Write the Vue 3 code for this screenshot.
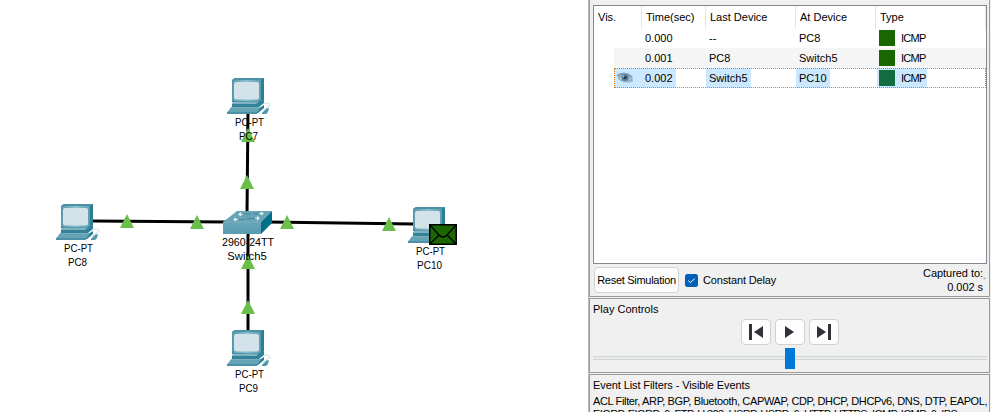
<script setup>
const links = [
  { x1: 248, y1: 110, x2: 247, y2: 214 },
  { x1: 248, y1: 233, x2: 248, y2: 333 },
  { x1: 92, y1: 221, x2: 228, y2: 222 },
  { x1: 268, y1: 222, x2: 414, y2: 224 },
]
const arrows = [[248, 135], [247, 182], [127, 221], [197, 222], [287, 222], [389, 224], [248, 262], [248, 307]]
const pcs = [
  { name: 'PC7', x: 227, y: 78, width: 19 },
  { name: 'PC8', x: 56, y: 204, width: 19 },
  { name: 'PC10', x: 408, y: 207, width: 25 },
  { name: 'PC9', x: 227, y: 330, width: 19 },
]
const events = [
  { time: '0.000', last: '--', at: 'PC8' },
  { time: '0.001', last: 'PC8', at: 'Switch5' },
  { time: '0.002', last: 'Switch5', at: 'PC10', current: true },
]
</script>

<template>
  <main class="app">
    <svg class="canvas" width="588" height="412" viewBox="0 0 588 412">
      <defs>
        <linearGradient id="face" x1="0" y1="0" x2="0" y2="1">
          <stop offset="0" stop-color="#68a5b8" />
          <stop offset="1" stop-color="#579caf" />
        </linearGradient>
        <linearGradient id="frame" x1="0" y1="0" x2="1" y2="0">
          <stop offset="0" stop-color="#5598ab" />
          <stop offset=".5" stop-color="#8fc0cd" />
          <stop offset="1" stop-color="#5c9db2" />
        </linearGradient>
      </defs>
      <line v-for="(l, i) in links" :key="i" v-bind="l" stroke="#000" stroke-width="3" />

      <g v-for="pc in pcs" :key="pc.name" :transform="`translate(${pc.x} ${pc.y})`">
        <path d="M5 2 8 0H37V21L33 24H5Z" fill="#2d7e95" />
        <path d="M5 2 8 0H37L34 2Z" fill="#4b92a7" />
        <rect x="5" y="2" width="29" height="21" rx="1" fill="url(#frame)" />
        <rect x="7" y="4" width="25" height="17.5" rx="2" fill="#d2e3ea" />
        <path d="M7 23H32L37 21V25L32 29H5V26Z" fill="#32829a" />
        <path d="M7 23.5H32L29 26H5Z" fill="#80b3c1" />
        <path d="M4 29.5 1 35H31L37 30V27L33 29.5Z" fill="#2b7b92" />
        <path d="M4 29.5H34L30 34.5H0Z" fill="#65a4b5" />
        <path d="M0 34H30V36H0Z" fill="#4c91a5" />
        <path d="M37 25.5Q44 24 43 28Q38 28 40 31" fill="none" stroke="#d5e3e8" stroke-width="1" />
        <path d="M35 35 38 31 42 30 41 34 39 36H35Z" fill="#4f97ab" />
        <path d="M36 34 39 31" stroke="#a4cad6" />
      </g>

      <g transform="translate(223 211)">
        <path d="M0 11 14 0H49L38 11Z" fill="#68a4b5" />
        <path d="M0 11H38V23H0Z" fill="url(#face)" />
        <path d="M38 11 49 0V12L38 23Z" fill="#00708a" />
        <path d="M0 11H38" stroke="#85b5c2" stroke-width=".7" />
        <g stroke="#438ba0" stroke-width="1" fill="none">
          <path d="M19 3H28M24 7.5H34M14 8.5H22M30 2.5H38" />
        </g>
        <g stroke="#e4f1f4" stroke-width="1.1" fill="none">
          <path d="M18 1.5 16 3.2 18 5M16 3.3H20M13 7 11 8.5 13 10M11 8.5H15M38 1 40 2.5 38 4M36 2.5H40M34 5.5 36 7.3 34 9M32 7.3H36" />
        </g>
      </g>

      <path v-for="([x, y], i) in arrows" :key="i" :d="`M${x} ${y - 7}l7 14h-14z`" fill="#6abf4b" />
      <g class="device-text">
        <template v-for="pc in pcs" :key="pc.name">
          <text :x="pc.x + 22.5" :y="pc.y + 48" textLength="29" lengthAdjust="spacingAndGlyphs">PC-PT</text>
          <text :x="pc.x + 21.5" :y="pc.y + 62" :textLength="pc.width" lengthAdjust="spacingAndGlyphs">{{ pc.name }}</text>
        </template>
        <text x="248" y="246" textLength="52" lengthAdjust="spacingAndGlyphs">2960-24TT</text>
        <text x="247" y="260" textLength="39.5" lengthAdjust="spacingAndGlyphs">Switch5</text>
      </g>
      <g transform="translate(429 224)">
        <rect x=".75" y=".75" width="26.5" height="19.5" fill="#1a6600" stroke="#000" stroke-width="1.5" />
        <path d="M1 1 10 11Q14 15 18 11L27 1M1 20 10 11M27 20 18 11" fill="none" stroke="#000" stroke-width="1.3" />
      </g>
    </svg>

    <aside class="panel">
      <section class="events">
        <div class="table">
          <div class="row head">
            <span>Vis.</span><span>Time(sec)</span><span>Last Device</span><span>At Device</span><span>Type</span>
          </div>
          <div v-for="e in events" :key="e.time" class="row event" :class="{ current: e.current }">
            <span class="vis">
              <svg v-if="e.current" width="18" height="14" viewBox="0 0 18 14">
                <path d="M1 4Q7 0 13 3L17 7V11Q11 13 5 10Z" fill="#a5c5dc" />
                <path d="M1 5Q8 0 16 6" fill="none" stroke="#7d9db5" stroke-width="2" />
                <path d="M2 7Q8 2 16 9Q9 12 4 9Z" fill="#b2cddf" stroke="#86a6bc" />
                <circle cx="9" cy="6.5" r="3.6" fill="#5d8099" />
                <circle cx="9" cy="6.5" r="1.8" fill="#24445c" />
                <circle cx="7.5" cy="5.5" r=".8" fill="#d0e3ef" />
              </svg>
            </span>
            <span><b>{{ e.time }}</b></span><span><b>{{ e.last }}</b></span><span><b>{{ e.at }}</b></span>
            <span><b class="type"><i></i>ICMP</b></span>
          </div>
        </div>
        <div class="options">
          <button class="reset">Reset Simulation</button>
          <svg class="check" width="13" height="13" viewBox="0 0 13 13">
            <rect width="13" height="13" rx="2.5" fill="#005fb8" />
            <path d="m3.3 6.5 2.2 2.2 4.2-4.2" fill="none" stroke="#fff" />
          </svg>
          <span class="delay">Constant Delay</span>
          <div class="captured">Captured to:<br />0.002 s</div>
          <small>*</small>
        </div>
      </section>
      <section class="play">
        <div>Play Controls</div>
        <div class="buttons">
          <button><svg width="16" height="18"><path d="M1 1h3v16H1zM15 3v12L6 9z" /></svg></button>
          <button><svg width="16" height="18"><path d="M3 3v12l9-6z" /></svg></button>
          <button><svg width="16" height="18"><path d="M1 3v12l9-6zM12 1h3v16h-3z" /></svg></button>
        </div>
        <div class="slider"><div class="thumb"></div></div>
      </section>
      <section class="filters">
        <div class="title">Event List Filters - Visible Events</div>
        <p>ACL Filter, ARP, BGP, Bluetooth, CAPWAP, CDP, DHCP, DHCPv6, DNS, DTP, EAPOL,</p>
        <p class="second">EIGRP, EIGRPv6, FTP, H.323, HSRP, HSRPv6, HTTP, HTTPS, ICMP, ICMPv6, IPSec,</p>
      </section>
    </aside>
  </main>
</template>

<style>
body { overflow: hidden; }
</style>
<style scoped>
* { box-sizing: border-box; }
.app { display: flex; width: 991px; height: 412px; overflow: hidden; background: #fff; color: #000; font: 11px/14px "Liberation Sans", sans-serif; }
.canvas { flex: none; }
.device-text { font-size: 11px; text-anchor: middle; }
.panel { width: 403px; flex: none; background: #f0f0f0; border-left: 1px solid #b8b8b8; overflow: hidden; }
section { border: 1px solid #9b9b9b; width: 401px; }
.events { height: 297px; border-top: 0; padding: 5px 2px 0 3px; }
.table { height: 259px; width: 394px; border: 1px solid #828790; background: #fff; }
.row { display: grid; grid-template-columns: 48px 64px 90px 80px 110px; }
.head { height: 22px; line-height: 23px; }
.head span { border-right: 1px solid #e5e5e5; padding-left: 4px; }
.event { width: 372px; height: 20px; grid-template-columns: 28px 64px 90px 80px 110px; margin-left: 20px; line-height: 20px; }
.event:nth-child(3) { background: #f5f5f5; }
.event b { display: inline-block; height: 20px; padding: 0 3px; font-weight: normal; }
.event .type { display: flex; align-items: center; width: 50px; margin-left: 1px; padding: 0 0 0 2px; letter-spacing: -.75px; }
.type i { flex: none; width: 16px; height: 16px; margin-right: 6px; background: #1a6600; }
.current { outline: 1px dotted #f07a10; outline-offset: -1px; }
.current .vis, .current b { background: #cce8ff; }
.current .type i { background: #146c43; }
.vis svg { display: block; margin: 3px 0 0 2px; }
.options { display: flex; align-items: center; height: 32px; }
button { border: 1px solid #d0d0d0; border-radius: 4px; background: #fdfdfd; padding: 0; color: #000; font: inherit; }
.reset { width: 85px; height: 26px; margin-left: 1px; letter-spacing: -.28px; white-space: nowrap; }
.check { margin: 0 5px 0 6px; }
.delay { letter-spacing: -.15px; }
.captured { margin-left: auto; text-align: right; letter-spacing: -.05px; }
small { color: #aaa; font-size: 8px; line-height: 8px; width: 4px; }
.play { margin-top: 1px; height: 75px; padding: 3px 2px 0 3px; }
.buttons { display: flex; justify-content: center; gap: 4px; margin-top: 3px; }
.buttons button { width: 30px; height: 26px; display: flex; align-items: center; justify-content: center; }
.buttons path { fill: #303238; }
.slider { height: 21px; margin-top: 3px; display: flex; justify-content: center; background: linear-gradient(#e7eaea, #e7eaea) 0 9px / 100% 2px no-repeat, linear-gradient(#d2d6d6, #d2d6d6) 0 8px / 100% 4px no-repeat; }
.thumb { width: 10px; height: 21px; background: #0078d7; }
.filters { margin-top: 1px; height: 60px; padding: 3px 0 0 3px; }
.title { letter-spacing: -.09px; }
.filters p { margin: 3px 0 0; white-space: nowrap; letter-spacing: -.36px; line-height: 13px; }
.filters .second { margin: 0; letter-spacing: -.58px; }
</style>
